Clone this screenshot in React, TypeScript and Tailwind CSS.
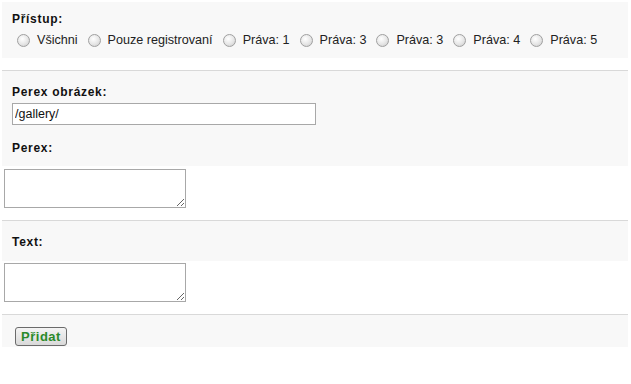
import React from "react";

const Radio = ({ label }: { label: string }) => (
  <label className="flex items-center">
    <span className="w-[13px] h-[13px] rounded-full border border-[#a0a0a0] bg-[radial-gradient(circle_at_40%_35%,#ffffff_0%,#e6e6e6_55%,#c8c8c8_100%)] shrink-0" />
    <span className="ml-[7px] mr-[10px]">{label}</span>
  </label>
);

const Label = ({ children }: { children: React.ReactNode }) => (
  <div className="font-bold text-[12px] leading-[14px] tracking-[0.7px] text-[#111]">{children}</div>
);

const Area = () => (
  <textarea className="block w-[182px] h-[39px] border border-[#a8a8a8] bg-white outline-none resize" />
);

export default function App() {
  return (
    <div className="w-[631px] h-[384px] bg-white text-[#222]" style={{ fontFamily: '"Liberation Sans", Arial, sans-serif' }}>
      <div className="h-[2px]" />
      <div className="ml-[2px] w-[626px] h-[56px] bg-[#f8f8f8] pl-[10px] pt-[10px]">
        <Label>Přístup:</Label>
        <div className="flex items-center mt-[6px] h-[16px] pl-[5px] text-[12.6px] text-[#222]">
          <Radio label="Všichni" />
          <Radio label="Pouze registrovaní" />
          <Radio label="Práva: 1" />
          <Radio label="Práva: 3" />
          <Radio label="Práva: 3" />
          <Radio label="Práva: 4" />
          <Radio label="Práva: 5" />
        </div>
      </div>
      <div className="h-[12px]" />
      <div className="ml-[2px] w-[626px] border-t border-[#d9d9d9] h-[96px] bg-[#f8f8f8] pl-[10px] pt-[14px]">
        <Label>Perex obrázek:</Label>
        <input
          defaultValue="/gallery/"
          className="block mt-[4px] w-[304px] h-[22px] border border-[#a8a8a8] bg-white px-[2px] text-[12.5px] text-[#111] outline-none"
        />
        <div className="mt-[16px]">
          <Label>Perex:</Label>
        </div>
      </div>
      <div className="ml-[4px] mt-[3px]">
        <Area />
      </div>
      <div className="h-[12px]" />
      <div className="ml-[2px] w-[626px] border-t border-[#d9d9d9] h-[41px] bg-[#f8f8f8] pl-[10px] pt-[14px]">
        <Label>Text:</Label>
      </div>
      <div className="ml-[4px] mt-[2px]">
        <Area />
      </div>
      <div className="h-[12px]" />
      <div className="ml-[2px] w-[626px] border-t border-[#d9d9d9] h-[33px] bg-[#f8f8f8] pl-[13px] pt-[12px]">
        <button className="block h-[19px] w-[52px] rounded-[3px] border border-[#6b6b6b] bg-[linear-gradient(#f4f4f4,#d9d9d9)] text-[13px] leading-[15px] font-bold tracking-[0.5px] text-[#2a8a2a] p-0">
          Přidat
        </button>
      </div>
    </div>
  );
}
